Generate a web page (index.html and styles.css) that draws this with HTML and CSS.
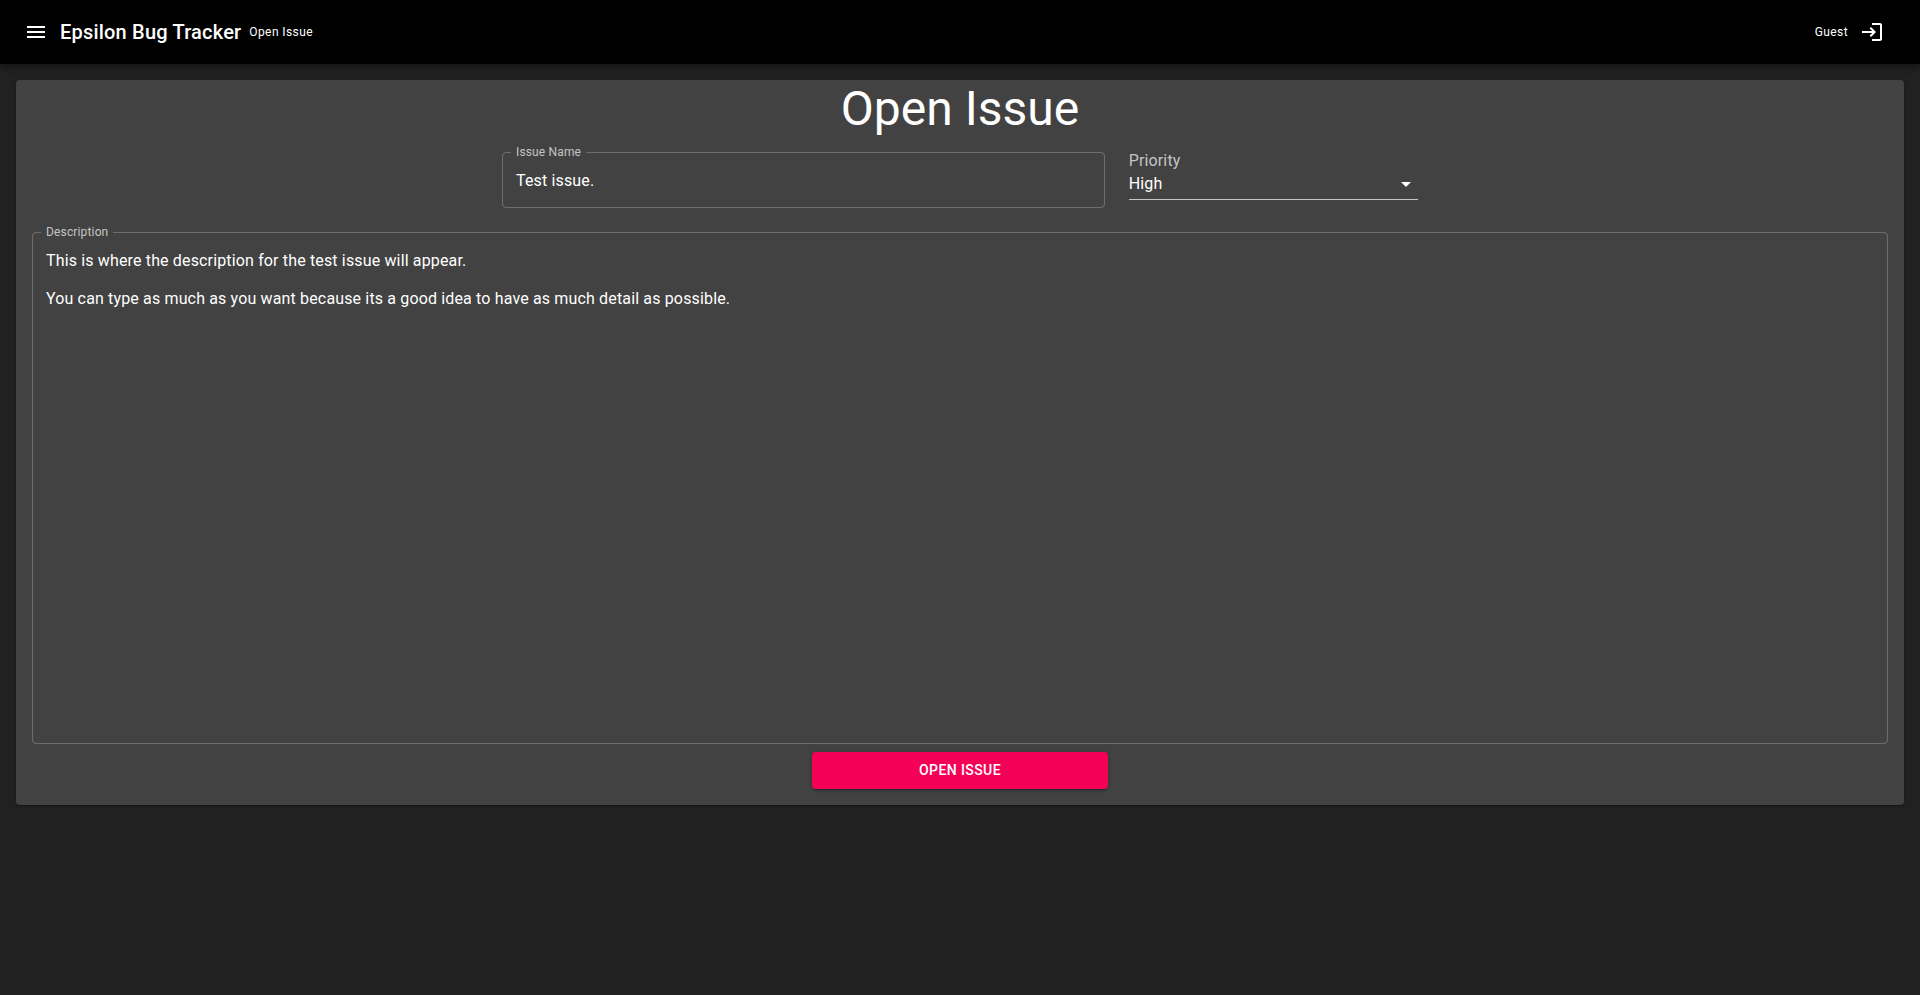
FILE: index.html
```html
<!DOCTYPE html>
<html lang="en">
<head>
<meta charset="utf-8">
<title>Epsilon Bug Tracker</title>
<link rel="stylesheet" href="styles.css">
</head>
<body>
<header class="app-bar">
  <svg class="icon" viewBox="0 0 24 24"><path d="M3 18h18v-2H3v2zm0-5h18v-2H3v2zm0-7v2h18V6H3z"/></svg>
  <h1 class="brand">Epsilon Bug Tracker</h1>
  <span class="caption">Open Issue</span>
  <span class="caption user">Guest</span>
  <svg class="icon" viewBox="0 0 24 24"><path d="M11 7L9.6 8.4l2.6 2.6H2v2h10.2l-2.6 2.6L11 17l5-5-5-5zm9 12h-8v2h8c1.1 0 2-.9 2-2V5c0-1.1-.9-2-2-2h-8v2h8v14z"/></svg>
</header>
<main class="paper">
  <h2 class="heading">Open Issue</h2>
  <div class="row">
    <fieldset class="field name">
      <legend class="legend">Issue Name</legend>
      <div class="value">Test issue.</div>
    </fieldset>
    <div class="select">
      <div class="select-label">Priority</div>
      <div class="select-value">
        <span>High</span>
        <svg class="icon arrow" viewBox="0 0 24 24"><path d="M7 10l5 5 5-5z"/></svg>
      </div>
    </div>
  </div>
  <fieldset class="field description">
    <legend class="legend">Description</legend>
    <div class="value">This is where the description for the test issue will appear.

You can type as much as you want because its a good idea to have as much detail as possible.</div>
  </fieldset>
  <button class="submit" type="button">Open Issue</button>
</main>
</body>
</html>
```
FILE: styles.css
```css
* { box-sizing: border-box; }
body {
  margin: 0;
  min-height: 100vh;
  background: #212121;
  color: #fff;
  font-family: Roboto, sans-serif;
}
.icon { width: 24px; height: 24px; flex: none; fill: currentColor; }
.app-bar {
  display: flex;
  align-items: center;
  height: 64px;
  padding: 0 36px 0 24px;
  background: #000;
  box-shadow: 0 2px 4px -1px rgba(0,0,0,.2), 0 4px 5px rgba(0,0,0,.14), 0 1px 10px rgba(0,0,0,.12);
}
.brand {
  margin: 0 8px 0 12px;
  font-size: 20px;
  font-weight: 500;
  line-height: 32px;
  letter-spacing: .01em;
}
.caption { font-size: 12px; line-height: 20px; letter-spacing: .03333em; }
.user { margin: 0 12px 0 auto; }
.paper {
  display: flex;
  flex-direction: column;
  margin: 16px;
  padding: 0 16px 16px;
  background: #424242;
  border-radius: 4px;
  box-shadow: 0 2px 1px -1px rgba(0,0,0,.2), 0 1px 1px rgba(0,0,0,.14), 0 1px 3px rgba(0,0,0,.12);
}
.heading {
  margin: 0;
  font-size: 48px;
  font-weight: 400;
  line-height: 57px;
  text-align: center;
}
.row {
  display: grid;
  grid-template-columns: 602.67px 289.33px;
  gap: 24px;
  justify-content: center;
  margin-top: 15px;
}
/* The legend is 12px tall, so its middle sits on the outline's top edge. */
.field {
  min-width: 0;
  margin: -6px 0 0;
  padding: 0 13px;
  border: 1px solid rgba(255,255,255,.23);
  border-radius: 4px;
  font-size: 16px;
  line-height: 19px;
  letter-spacing: .00938em;
}
.legend {
  margin-left: -5px;
  padding: 0 5px;
  color: rgba(255,255,255,.7);
  font-size: 12px;
  line-height: 12px;
}
.name { height: 62px; }
.value { padding-top: 13px; white-space: pre-wrap; }
.select { font-size: 16px; letter-spacing: .00938em; }
.select-label { line-height: 17px; color: rgba(255,255,255,.7); }
.select-value {
  display: flex;
  align-items: center;
  justify-content: space-between;
  height: 31px;
  padding-bottom: 1px;
  border-bottom: 1px solid rgba(255,255,255,.7);
  line-height: 19px;
}
.arrow { margin-top: 1px; }
.description { height: 518px; margin-top: 18px; }
.submit {
  align-self: center;
  width: 296px;
  height: 36.5px;
  margin-top: 8px;
  border: 0;
  border-radius: 4px;
  background: #f50057;
  color: #fff;
  font: 500 14px/24.5px Roboto, sans-serif;
  letter-spacing: .02857em;
  text-transform: uppercase;
  box-shadow: 0 3px 1px -2px rgba(0,0,0,.2), 0 2px 2px rgba(0,0,0,.14), 0 1px 5px rgba(0,0,0,.12);
}
```
